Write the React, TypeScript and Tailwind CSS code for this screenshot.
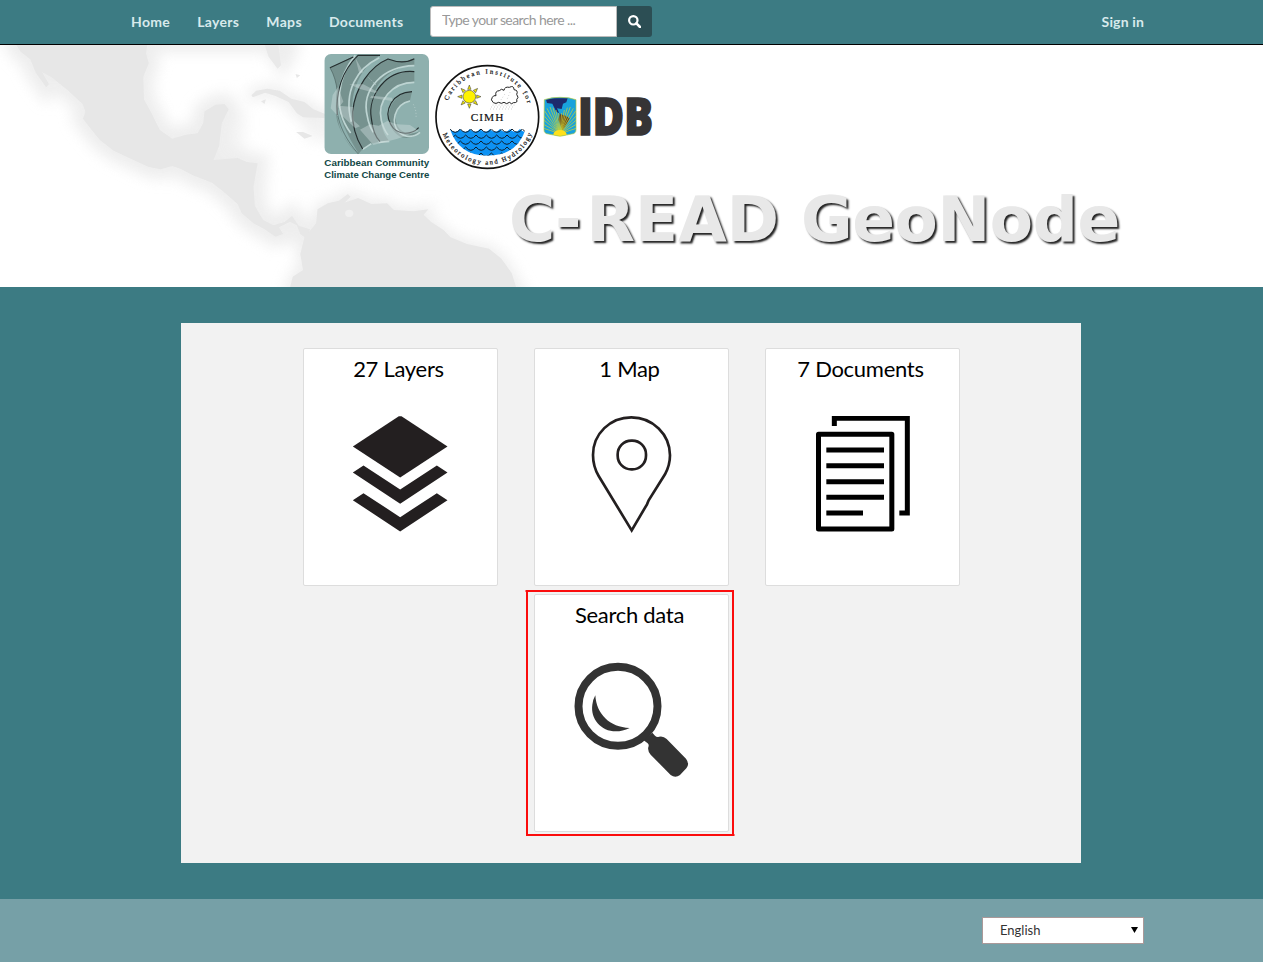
import type { ReactNode } from "react";

const SEA_ROWS = [0, 1, 2, 3, 4];

function MapBackdrop() {
  const mainland =
    "M38 0 L60 35 L88 58 L104 98 L134 142 L142 132 L122 96 L150 112 L196 150 L240 192 L248 216 L241 236 L268 272 L290 300 L330 332 L380 356 L430 380 L466 388 L500 378 L524 386 L560 406 L616 428 L650 456 L690 492 L702 520 L736 550 L766 566 L800 590 L822 582 L810 562 L842 545 L862 556 L872 582 L892 598 L900 568 L868 558 L848 528 L826 546 L794 556 L764 540 L740 498 L736 440 L748 370 L716 366 L690 354 L620 360 L636 318 L644 250 L664 208 L652 192 L626 194 L594 214 L590 250 L574 280 L540 284 L500 296 L464 270 L440 220 L418 178 L416 110 L432 70 L424 40 L430 0 Z";
  const south =
    "M838 760 L850 710 L880 690 L872 642 L884 592 L918 550 L922 508 L952 490 L984 482 L1010 462 L1018 470 L1000 488 L1040 474 L1078 492 L1124 490 L1144 510 L1200 514 L1244 508 L1230 524 L1252 546 L1288 570 L1308 592 L1356 612 L1420 626 L1456 656 L1486 700 L1504 760 Z";
  const cuba =
    "M730 166 L744 152 L776 146 L812 152 L846 176 L884 186 L910 208 L944 222 L942 234 L880 232 L862 220 L838 186 L800 168 L770 158 L734 172 Z";
  return (
    <svg className="absolute inset-0 h-full w-full" viewBox="0 0 1263 242" aria-hidden="true">
      <defs>
        <filter id="wide" x="-20%" y="-20%" width="140%" height="140%">
          <feGaussianBlur stdDeviation="20" />
        </filter>
        <filter id="edge" x="-10%" y="-10%" width="120%" height="120%">
          <feGaussianBlur stdDeviation="2.2" />
        </filter>
      </defs>
      <g transform="scale(0.34439 0.33333) translate(0 -15)">
        <g filter="url(#wide)" fill="#e8e8e8" stroke="#e8e8e8" strokeWidth="60" opacity="0.75">
          <path d={mainland} />
          <path d={south} strokeWidth="24" />
          <path d={cuba} strokeWidth="24" />
          <path d="M430 -30 H850 V30 L820 84 L780 20 H440 Z" strokeWidth="34" />
          <path d="M880 200 L1100 280 L1080 310 L900 290 Z" strokeWidth="20" opacity=".7" />
          <path d="M1440 650 L1480 680 L1540 780 H1440 Z" strokeWidth="10" />
          <path d="M650 240 L710 220 L700 330 L770 380 L770 500 L720 480 Z" strokeWidth="10" opacity=".6" />
        </g>
        <g filter="url(#edge)" fill="#e7e7e7">
          <path d={mainland} />
          <path d={south} />
          <path d={cuba} />
          <path d="M764 0 L780 50 L806 86 L816 76 L806 0 Z" fill="#e9e9e9" />
          <path d="M860 276 L880 276 L908 288 L884 296 Z" />
          <path d="M758 184 L772 178 L768 192 Z M858 102 L872 106 L862 114 Z" />
        </g>
        <ellipse cx="1014" cy="520" rx="12" ry="11" fill="#f0f0f0" />
      </g>
    </svg>
  );
}

function ClimateCentreLogo() {
  return (
    <svg className="mt-[9px] h-[132px] w-[107px] shrink-0 overflow-visible" viewBox="42 27 321 396" role="img">
      <defs>
        <clipPath id="tile">
          <rect x="43" y="27" width="314" height="300" rx="20" />
        </clipPath>
        <filter id="soft">
          <feGaussianBlur stdDeviation="2" />
        </filter>
      </defs>
      <g clipPath="url(#tile)">
        <rect x="43" y="27" width="314" height="300" fill="#8eb0ae" />
        <g fill="#76928f">
          <path d="M60 68 L130 34 C86 90 68 170 82 230 C94 270 120 306 146 328 C96 290 70 220 82 140 Q78 100 60 68 Z" />
          <path d="M144 31 H210 C150 70 120 140 128 210 C130 256 146 290 158 312 L146 326 C112 270 80 210 84 160 C90 110 110 66 144 31 Z" />
          <path d="M234 42 C260 54 290 48 313 42 V60 C230 66 176 130 184 210 C186 250 198 276 206 290 L184 296 L158 312 C140 270 126 250 128 200 C134 130 180 64 234 42 Z" />
          <path d="M313 80 V110 C250 110 208 160 212 220 C214 250 224 272 238 288 L210 292 C172 240 176 180 200 140 C224 96 268 80 313 80 Z" />
          <path d="M306 140 L300 166 C264 176 252 200 258 230 C268 270 310 270 330 258 C300 290 262 286 240 240 C226 196 250 146 306 140 Z" />
        </g>
        <g fill="none" stroke="#bdd4d2" strokeWidth="5">
          <path d="M136 31 C84 96 66 190 122 264 " />
          <path d="M208 38 C140 70 100 140 124 230" />
          <path d="M313 62 C220 64 152 132 172 214 Q176 240 190 262" />
          <path d="M313 112 C246 112 200 168 214 226 Q220 252 234 270" />
          <path d="M300 168 C252 178 240 236 268 262 C286 280 314 276 330 262" />
          <path d="M158 313 L184 296 M206 292 L238 289" />
        </g>
        <g fill="none" stroke="#252e2f" strokeWidth="3.5">
          <path d="M60 68 L130 36" />
          <path d="M60 68 Q78 100 82 140 C70 220 104 280 146 328" stroke="#4c605f" strokeWidth="2" />
          <path d="M210 31 H144 C104 70 76 130 82 210" />
          <path d="M313 41 C290 54 260 52 234 42 C180 64 134 130 128 200 C126 250 142 286 158 312" />
          <path d="M313 80 C230 72 172 150 184 220 C188 256 200 280 210 290" />
          <path d="M306 140 C246 142 220 198 242 238 C262 276 308 268 326 248" />
        </g>
        <g fill="#d4e2e0" opacity=".4" filter="url(#soft)">
          <path d="M136 38 L160 82 L148 86 Z M118 118 L160 118 L202 140 L196 144 L150 132 Z" />
          <path d="M84 126 L68 150 L62 190 L84 214 L84 190 L100 170 Z M86 182 L130 186 L132 228 L150 244 L136 250 L90 206 Z" />
          <path d="M150 254 L180 238 L206 242 L232 228 L260 238 L300 240 L326 258 L260 282 L190 300 Z" />
          <path d="M184 152 L246 158 L248 168 L180 158 Z" />
        </g>
        <path d="M176 98 L198 120 M310 178 Q320 196 318 220" fill="none" stroke="#c8dad8" strokeWidth="2" strokeDasharray="3 6" />
      </g>
      <g fill="#114846" fontFamily="'Liberation Sans', Arial, sans-serif" fontWeight="700" fontSize="29">
        <text x="43" y="363" textLength="315" lengthAdjust="spacingAndGlyphs">
          Caribbean Community
        </text>
        <text x="43" y="399" textLength="315" lengthAdjust="spacingAndGlyphs">
          Climate Change Centre
        </text>
      </g>
    </svg>
  );
}

function CimhLogo() {
  return (
    <svg className="mt-[19px] ml-[3px] size-[107px] shrink-0" viewBox="12 27 321 321" role="img">
      <defs>
        <path id="upperArc" d="M46 182 A126 126 0 0 1 298 182" />
        <path id="lowerArc" d="M29 186 A143 143 0 0 0 315 186" />
        <clipPath id="bowl">
          <path d="M60 222 H287 Q262 302 172 302 Q86 302 60 222 Z" />
        </clipPath>
      </defs>
      <circle cx="172" cy="186" r="154" fill="#fff" stroke="#111" strokeWidth="5" />
      <g fontFamily="'Liberation Serif', 'Times New Roman', serif" fill="#111" stroke="#111" strokeWidth="0.6">
        <text fontSize="20">
          <textPath href="#upperArc" startOffset="46" textLength="312">
            Caribbean Institute for
          </textPath>
        </text>
        <text fontSize="20">
          <textPath href="#lowerArc" startOffset="52" textLength="345">
            Meteorology and Hydrology
          </textPath>
        </text>
        <text x="122" y="197" fontSize="34" textLength="98">
          CIMH
        </text>
      </g>
      <g transform="translate(118 125)">
        <g fill="#f0e600" stroke="#333" strokeWidth="1.5">
          <path d="M-5 -22 L0 -35 L5 -22 Z M-5 22 L0 35 L5 22 Z M-22 -5 L-35 0 L-22 5 Z M22 -5 L35 0 L22 5 Z" />
          <path transform="rotate(45)" d="M-5 -22 L0 -35 L5 -22 Z M-5 22 L0 35 L5 22 Z M-22 -5 L-35 0 L-22 5 Z M22 -5 L35 0 L22 5 Z" />
        </g>
        <circle r="19" fill="#fff200" stroke="#555" strokeWidth="2" />
      </g>
      <path
        d="M190 143 Q180 134 187 127 Q190 120 198 122 Q194 108 208 107 Q214 99 222 106 Q224 94 238 97 Q252 90 252 104 Q266 106 260 118 Q268 128 260 134 Q264 144 250 143 Q246 150 238 142 Q230 150 222 142 Q214 148 206 142 Q198 148 190 143 Z"
        fill="#fff"
        stroke="#222"
        strokeWidth="3"
      />
      <g fill="none" stroke="#777" strokeWidth="1.5" strokeDasharray="2 7">
        <path d="M188 150 H254 M183 156 H248 M180 162 H246 M224 118 L212 136 M240 112 L230 136" />
      </g>
      <g clipPath="url(#bowl)">
        <path d="M60 222 q15 18 30 0 q15 18 30 0 q15 18 30 0 q15 18 30 0 q15 18 30 0 q15 18 30 0 q15 18 30 0 q15 18 30 0 V310 H60 Z" fill="#0d92f4" />
        {SEA_ROWS.map((row) => (
          <path
            key={row}
            transform={`translate(${row % 2 === 0 ? 0 : -15} ${row * 18})`}
            d="M60 222 q16 20 31 0 q16 20 31 0 q16 20 31 0 q16 20 31 0 q16 20 31 0 q16 20 31 0 q16 20 31 0 q16 20 31 0"
            fill="none"
            stroke="#101c28"
            strokeWidth="3"
          />
        ))}
      </g>
    </svg>
  );
}

function IdbLogo() {
  return (
    <svg className="mt-[51px] ml-[2px] h-[42px] w-[111px] shrink-0 overflow-visible" viewBox="24 33 333 126" role="img">
      <defs>
        <clipPath id="shield">
          <path d="M28 44 Q52 36 75 37 Q100 36 123 44 V134 Q123 146 110 147 L75 154 L40 147 Q27 146 27 134 Z" />
        </clipPath>
      </defs>
      <g clipPath="url(#shield)">
        <rect x="24" y="33" width="102" height="126" fill="#19a2dc" />
        <path d="M33 44 L58 40 L98 40 L94 52 L84 56 L80 72 L66 70 L74 88 L88 92 L64 80 L52 56 L36 54 Z" fill="#1d2a6c" />
        <path d="M74 88 L92 92 L104 100 L96 116 L82 138 L76 120 L70 104 Z" fill="#5b4427" />
        <g stroke="#d9d628" strokeWidth="2">
          <path d="M75 146 L26 130 M75 146 L26 118 M75 146 L27 105 M75 146 L27 92 M75 146 L29 78 M75 146 L36 70 M75 146 L45 66 M75 146 L54 68 M75 146 L63 75 M75 146 L71 84" />
          <path d="M75 146 L124 130 M75 146 L124 118 M75 146 L124 105 M75 146 L124 92 M75 146 L122 78 M75 146 L115 70 M75 146 L106 66 M75 146 L97 68 M75 146 L88 75 M75 146 L80 84" />
        </g>
        <ellipse cx="75" cy="149" rx="20" ry="14" fill="#ffe11a" />
      </g>
      <path d="M28 44 Q52 36 75 37 Q100 36 123 44 V134 Q123 146 110 147 L75 154 L40 147 Q27 146 27 134 Z" fill="none" stroke="#b5c93a" strokeWidth="2" />
      <text
        x="129"
        y="149"
        fontFamily="'Open Sans', 'Noto Sans', sans-serif"
        fontWeight="800"
        fontSize="152"
        fill="#363435"
        stroke="#363435"
        strokeWidth="5"
        textLength="225"
        lengthAdjust="spacingAndGlyphs"
      >
        IDB
      </text>
    </svg>
  );
}

function LayersIcon() {
  return (
    <svg className="h-[117px] w-24" viewBox="158.500 227.500 288 351" fill="#231f20" overflow="visible">
      <path d="M296 228 H304 L442 319 L300 412 L158 319 Z" />
      <path d="M190 376 L300 448 L410 376 L442 397 L300 491 L158 397 Z" />
      <path d="M190 459 L300 531 L410 459 L442 480 L300 574 L158 480 Z" />
    </svg>
  );
}

function MapPinIcon() {
  return (
    <svg className="h-[117px] w-24" viewBox="162 229 288 351" fill="none" stroke="#231f20" strokeWidth="8">
      <path d="M305 572 L206 409 Q189 380 189 346 C189 282 241 233 304 233 C368 233 420 284 420 347 Q420 377 405 404 L356 482 L351 494 Z" />
      <rect x="263" y="303" width="85" height="86" rx="41" />
    </svg>
  );
}

function DocumentsIcon() {
  return (
    <svg className="h-[117px] w-24" viewBox="165 229 288 351" fill="none" stroke="#000" strokeWidth="15">
      <path d="M223 259 V236 H442 V520 H418" />
      <rect x="175.500" y="284" width="220" height="284" strokeLinejoin="round" />
      <path d="M199 331 H372 M199 378 H372 M199 426 H372 M199 473 H372 M199 520 H309" />
    </svg>
  );
}

function MagnifierIcon() {
  return (
    <svg className="h-[117px] w-[117px]" viewBox="160 232 351 351" fill="#333">
      <circle cx="295" cy="365" r="118.500" fill="none" stroke="#333" strokeWidth="24" />
      <path d="M227 332 C230 388 270 428 330 430 C264 462 210 412 218 360 Q220 344 227 332 Z" />
      <path d="M372 467 L398 444 L406 453 Q412 459 418 456 Q431 453 441 463 L499 522 Q511 538 500 551 L481 571 Q467 582 453 571 L393 510 Q383 499 386 487 Q389 481 384 476 Z" />
    </svg>
  );
}

function Card({ title, icon, highlighted = false }: { title: string; icon: ReactNode; highlighted?: boolean }) {
  return (
    <a
      href="#"
      className="relative flex h-[238px] w-[195px] flex-col items-center rounded-[2px] border border-[#ddd] bg-white pt-1 text-black"
    >
      <h3 className="-ml-1 text-[22px] leading-8 tracking-[-0.28px] whitespace-nowrap">{title}</h3>
      <div className="mt-[31px] flex justify-center">{icon}</div>
      {highlighted && (
        <svg
          className="pointer-events-none absolute -top-[5px] -left-[10px] h-[247px] w-[211px]"
          viewBox="0 0 211 247"
          fill="none"
          stroke="#fb0d0d"
          strokeWidth="2"
        >
          <path d="M0.500 1 H209 M2 1 V246 M208 1 V246 M1 245 H209.500" />
        </svg>
      )}
    </a>
  );
}

export default function App() {
  return (
    <div className="flex h-[962px] w-[1263px] flex-col overflow-hidden bg-[#3c7b83] font-['Lato',sans-serif]">
      <nav className="flex h-[45px] shrink-0 items-center border-b border-black bg-[#3c7b83] pr-[119px] pl-[131px] text-sm font-bold text-[#d8eaec]">
        <div className="flex w-[299px] gap-[27px] tracking-[0.33px]">
          <a href="#">Home</a>
          <a href="#">Layers</a>
          <a href="#">Maps</a>
          <a href="#">Documents</a>
        </div>
        <form className="-mt-px flex h-[31px] w-[222px]">
          <input
            className="h-full w-[187px] rounded-l-[3px] border border-[#bbb] bg-white pr-2 pb-1 pl-[11px] text-sm font-normal tracking-[-0.6px] placeholder:text-[#999]"
            placeholder="Type your search here ..."
          />
          <button type="button" className="flex w-[35px] items-center justify-center rounded-r-[3px] bg-[#2c4e54]">
            <svg className="size-[13px]" viewBox="0 0 13 13" fill="none" stroke="#fff">
              <circle cx="5.300" cy="5.300" r="4.200" strokeWidth="2.200" />
              <path d="M8.400 8.400 L12 12" strokeWidth="2.600" strokeLinecap="round" />
            </svg>
          </button>
        </form>
        <a href="#" className="ml-auto tracking-[0.15px]">
          Sign in
        </a>
      </nav>

      <header className="relative h-[242px] shrink-0 overflow-hidden bg-white">
        <MapBackdrop />
        <div className="relative flex h-[136px] items-start pl-[324px]">
          <ClimateCentreLogo />
          <CimhLogo />
          <IdbLogo />
        </div>
        <h1 className="relative pt-px pl-[509px] font-['DejaVu_Sans',sans-serif] text-[63px] leading-[76px] font-bold whitespace-nowrap text-[#e8e8e8] [text-shadow:2px_2px_2px_#222]">
          C<span className="tracking-[5px]">-</span>READ <span className="tracking-[-0.4px]">GeoNode</span>
        </h1>
      </header>

      <main className="flex h-[612px] shrink-0 pt-9 pl-[181px]">
        <section className="flex h-[540px] w-[900px] flex-col items-center gap-2 bg-[#f2f2f2] pt-[25px] pl-px">
          <div className="flex gap-9">
            <Card title="27 Layers" icon={<LayersIcon />} />
            <Card title="1 Map" icon={<MapPinIcon />} />
            <Card title="7 Documents" icon={<DocumentsIcon />} />
          </div>
          <Card title="Search data" icon={<MagnifierIcon />} highlighted />
        </section>
      </main>

      <footer className="flex h-[63px] shrink-0 items-start justify-end bg-[#76a0a7] pt-[18px] pr-[119px]">
        <button
          type="button"
          className="flex h-[27px] w-[162px] items-center justify-between border border-[#a99] bg-white pr-[5px] pl-[17px] text-[13px] text-[#333]"
        >
          English
          <svg className="-mt-0.5 h-1.5 w-[7px]" viewBox="0 0 7 6">
            <path d="M0 0 H7 L3.500 6 Z" />
          </svg>
        </button>
      </footer>
    </div>
  );
}
